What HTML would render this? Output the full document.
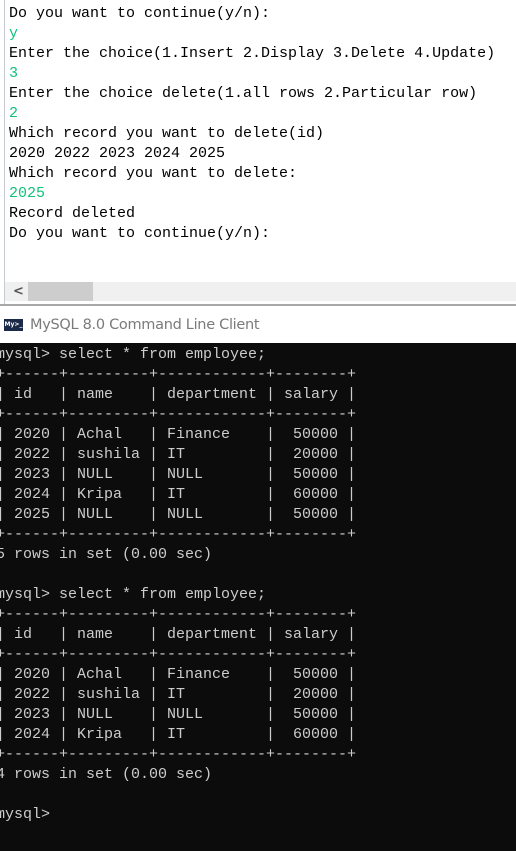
<!DOCTYPE html>
<html><head><style>
html,body{margin:0;padding:0;width:516px;height:851px;overflow:hidden;background:#fff}
#top{position:absolute;left:0;top:0;width:516px;height:306px;background:#fff}
#lb{position:absolute;left:4px;top:0;width:1px;height:304px;background:#c5cad3}
#tt{position:absolute;left:9px;top:4px;font:15px/20px "Liberation Mono",monospace;color:#000;white-space:pre;letter-spacing:0}
.g{color:#10c27a}
#sb{position:absolute;left:5px;top:282px;width:511px;height:19px;background:#f0f0f0}
#sb .a{position:absolute;left:8px;top:0;font:bold 13px/19px "DejaVu Sans",sans-serif;color:#555}
#sb .t{position:absolute;left:23px;top:0;width:65px;height:19px;background:#cdcdcd}
#sep{position:absolute;left:0;top:304px;width:516px;height:2px;background:#a8a8a8}
#title{position:absolute;left:0;top:306px;width:516px;height:37px;background:#fff}
#icon{position:absolute;left:4px;top:319px;width:19px;height:12px;background:#1b2a48;color:#fff;font:bold 6px/12px "DejaVu Sans",sans-serif;text-align:center}
#ttl{position:absolute;left:30px;top:314px;font:14.5px/22px "DejaVu Sans","Liberation Sans",sans-serif;color:#7a7a7a;letter-spacing:-0.3px}
#term{position:absolute;left:0;top:343px;width:516px;height:508px;background:#0c0c0c}
#tx{position:absolute;left:-4px;top:345px;font:15px/20px "Liberation Mono",monospace;color:#cccccc;white-space:pre}
</style></head><body>
<div id="top"></div><div id="lb"></div>
<div id="tt">Do you want to continue(y/n):
<span class="g">y</span>
Enter the choice(1.Insert 2.Display 3.Delete 4.Update)
<span class="g">3</span>
Enter the choice delete(1.all rows 2.Particular row)
<span class="g">2</span>
Which record you want to delete(id)
2020 2022 2023 2024 2025
Which record you want to delete:
<span class="g">2025</span>
Record deleted
Do you want to continue(y/n):</div>
<div id="sb"><span class="a">&lt;</span><div class="t"></div></div>
<div id="sep"></div>
<div id="title"></div>
<div id="icon">My&gt;_</div>
<div id="ttl">MySQL 8.0 Command Line Client</div>
<div id="term"></div>
<div id="tx">mysql&gt; select * from employee;
+------+---------+------------+--------+
| id   | name    | department | salary |
+------+---------+------------+--------+
| 2020 | Achal   | Finance    |  50000 |
| 2022 | sushila | IT         |  20000 |
| 2023 | NULL    | NULL       |  50000 |
| 2024 | Kripa   | IT         |  60000 |
| 2025 | NULL    | NULL       |  50000 |
+------+---------+------------+--------+
5 rows in set (0.00 sec)

mysql&gt; select * from employee;
+------+---------+------------+--------+
| id   | name    | department | salary |
+------+---------+------------+--------+
| 2020 | Achal   | Finance    |  50000 |
| 2022 | sushila | IT         |  20000 |
| 2023 | NULL    | NULL       |  50000 |
| 2024 | Kripa   | IT         |  60000 |
+------+---------+------------+--------+
4 rows in set (0.00 sec)

mysql&gt;</div>
</body></html>
